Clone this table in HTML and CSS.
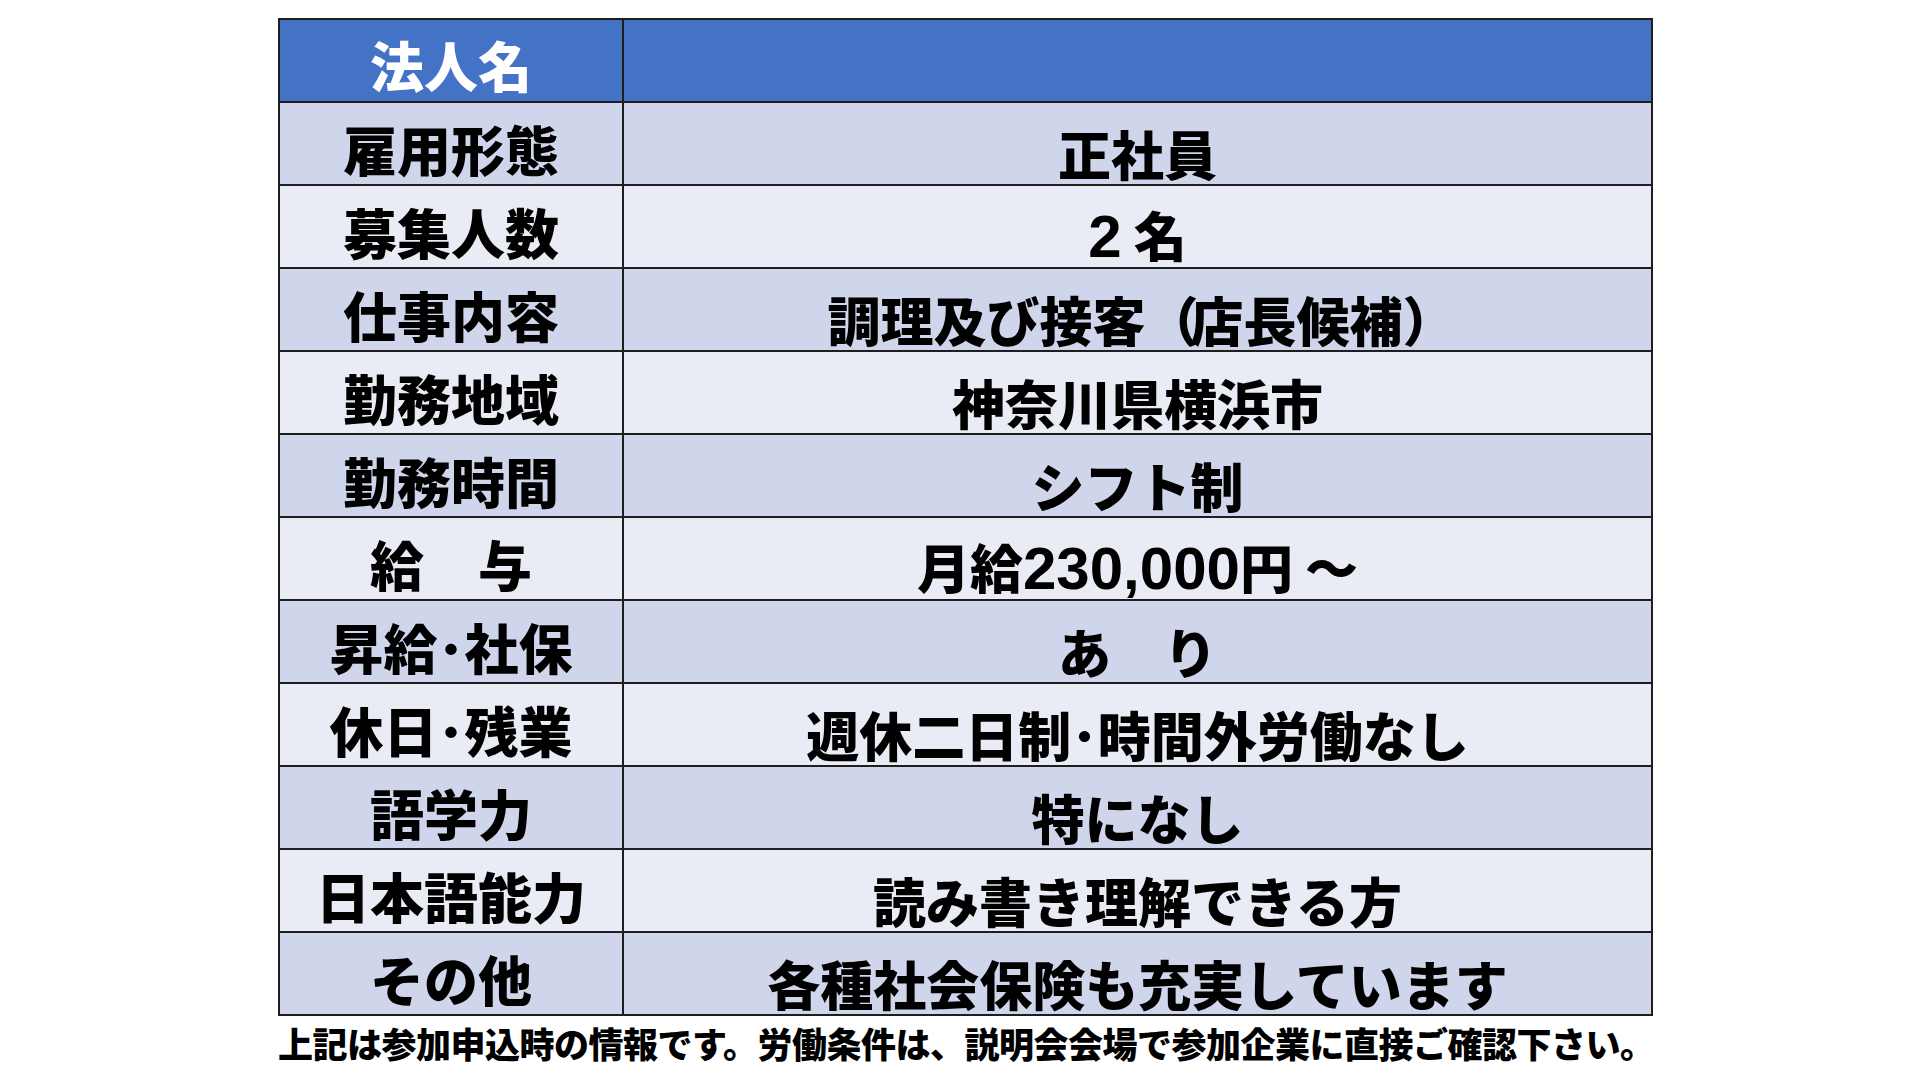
FILE: index.html
```html
<!DOCTYPE html>
<html lang="ja">
<head>
<meta charset="utf-8">
<title>求人情報</title>
<link rel="stylesheet" href="styles.css">
</head>
<body>
<div class="page">
  <table class="jobs">
    <colgroup><col class="c-label"><col class="c-value"></colgroup>
    <tr class="head"><th class="label">法人名</th><th class="value"></th></tr>
    <tr class="dark"><td class="label">雇用形態</td><td class="value">正社員</td></tr>
    <tr class="light"><td class="label">募集人数</td><td class="value"><span class="num">2</span> 名</td></tr>
    <tr class="dark"><td class="label">仕事内容</td><td class="value">調理及び接客<span class="paren">（</span>店長候補<span class="paren">）</span></td></tr>
    <tr class="light"><td class="label">勤務地域</td><td class="value">神奈川県横浜市</td></tr>
    <tr class="dark"><td class="label">勤務時間</td><td class="value">シフト制</td></tr>
    <tr class="light"><td class="label">給　与</td><td class="value">月給<span class="num">230,000</span>円 ～</td></tr>
    <tr class="dark"><td class="label">昇給･社保</td><td class="value">あ　り</td></tr>
    <tr class="light"><td class="label">休日･残業</td><td class="value">週休二日制･時間外労働なし</td></tr>
    <tr class="dark"><td class="label">語学力</td><td class="value">特になし</td></tr>
    <tr class="light"><td class="label">日本語能力</td><td class="value">読み書き理解できる方</td></tr>
    <tr class="dark"><td class="label">その他</td><td class="value">各種社会保険も充実しています</td></tr>
  </table>
  <p class="note">上記は参加申込時の情報です。労働条件は、説明会会場で参加企業に直接ご確認下さい。</p>
</div>
</body>
</html>
```

FILE: styles.css
```css
html, body {
  margin: 0;
  padding: 0;
  background: #ffffff;
}
body {
  width: 1920px;
  height: 1080px;
  overflow: hidden;
  font-family: "Noto Sans CJK JP", "Noto Sans", sans-serif;
  font-weight: 900;
  color: #000;
}
.page {
  padding: 18px 0 0 278px;
}
.jobs {
  border-collapse: collapse;
  width: 1375px;
  table-layout: fixed;
}
.c-label { width: 344px; }
.jobs th, .jobs td {
  border: 2px solid #1e1e1e;
  height: 83px;
  padding: 0;
  box-sizing: border-box;
  text-align: center;
  vertical-align: middle;
  line-height: 1;
  white-space: nowrap;
}
.jobs .label {
  font-size: 54px;
  padding-top: 10px;
}
.jobs .value {
  font-size: 53px;
  padding-top: 20px;
}
.num {
  font-family: "Liberation Sans", Arial, sans-serif;
  font-weight: 700;
  font-size: 60px;
  line-height: 1;
}
.paren {
  letter-spacing: -8px;
}
.head th {
  background: #4472c4;
  color: #ffffff;
  font-weight: 900;
}
.head .label { padding-top: 8px; }
.dark td { background: #cfd5ea; }
.light td { background: #e9ebf5; }
.note {
  margin: 6px 0 0 0;
  font-size: 35px;
  line-height: 1.2;
  white-space: nowrap;
  letter-spacing: -0.5px;
}
```
